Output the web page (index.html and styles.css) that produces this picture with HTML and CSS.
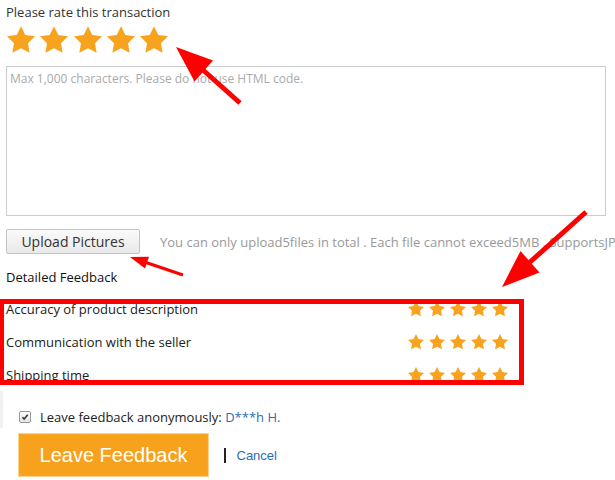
FILE: index.html
```html
<!DOCTYPE html>
<html>
<head>
<meta charset="utf-8">
<link rel="stylesheet" href="styles.css">
</head>
<body>
<div class="page">
  <div class="rate-label">Please rate this transaction</div>
  <div class="big-stars">
    <svg class="star-big" viewBox="2 2 20 19.1"><path d="M12 2l3.09 6.26L22 9.27l-5 4.87 1.18 6.88L12 17.77l-6.18 3.25L7 14.14 2 9.27l6.91-1.01L12 2z"/></svg>
    <svg class="star-big" viewBox="2 2 20 19.1"><path d="M12 2l3.09 6.26L22 9.27l-5 4.87 1.18 6.88L12 17.77l-6.18 3.25L7 14.14 2 9.27l6.91-1.01L12 2z"/></svg>
    <svg class="star-big" viewBox="2 2 20 19.1"><path d="M12 2l3.09 6.26L22 9.27l-5 4.87 1.18 6.88L12 17.77l-6.18 3.25L7 14.14 2 9.27l6.91-1.01L12 2z"/></svg>
    <svg class="star-big" viewBox="2 2 20 19.1"><path d="M12 2l3.09 6.26L22 9.27l-5 4.87 1.18 6.88L12 17.77l-6.18 3.25L7 14.14 2 9.27l6.91-1.01L12 2z"/></svg>
    <svg class="star-big" viewBox="2 2 20 19.1"><path d="M12 2l3.09 6.26L22 9.27l-5 4.87 1.18 6.88L12 17.77l-6.18 3.25L7 14.14 2 9.27l6.91-1.01L12 2z"/></svg>
  </div>
  <textarea class="comment" placeholder="Max 1,000 characters. Please do not use HTML code."></textarea>
  <div class="upload-row">
    <button class="upload-btn">Upload Pictures</button>
    <span class="upload-note">You can only upload5files in total . Each file cannot exceed5MB . SupportsJPG, JPEG, PNG formats.</span>
  </div>
  <div class="detail-title">Detailed Feedback</div>
  <div class="detail">
    <div class="detail-row">
      <span class="detail-name">Accuracy of product description</span>
      <span class="small-stars">
        <svg class="star-small" viewBox="2 2 20 19.1"><path d="M12 2l3.09 6.26L22 9.27l-5 4.87 1.18 6.88L12 17.77l-6.18 3.25L7 14.14 2 9.27l6.91-1.01L12 2z"/></svg>
        <svg class="star-small" viewBox="2 2 20 19.1"><path d="M12 2l3.09 6.26L22 9.27l-5 4.87 1.18 6.88L12 17.77l-6.18 3.25L7 14.14 2 9.27l6.91-1.01L12 2z"/></svg>
        <svg class="star-small" viewBox="2 2 20 19.1"><path d="M12 2l3.09 6.26L22 9.27l-5 4.87 1.18 6.88L12 17.77l-6.18 3.25L7 14.14 2 9.27l6.91-1.01L12 2z"/></svg>
        <svg class="star-small" viewBox="2 2 20 19.1"><path d="M12 2l3.09 6.26L22 9.27l-5 4.87 1.18 6.88L12 17.77l-6.18 3.25L7 14.14 2 9.27l6.91-1.01L12 2z"/></svg>
        <svg class="star-small" viewBox="2 2 20 19.1"><path d="M12 2l3.09 6.26L22 9.27l-5 4.87 1.18 6.88L12 17.77l-6.18 3.25L7 14.14 2 9.27l6.91-1.01L12 2z"/></svg>
      </span>
    </div>
    <div class="detail-row">
      <span class="detail-name">Communication with the seller</span>
      <span class="small-stars">
        <svg class="star-small" viewBox="2 2 20 19.1"><path d="M12 2l3.09 6.26L22 9.27l-5 4.87 1.18 6.88L12 17.77l-6.18 3.25L7 14.14 2 9.27l6.91-1.01L12 2z"/></svg>
        <svg class="star-small" viewBox="2 2 20 19.1"><path d="M12 2l3.09 6.26L22 9.27l-5 4.87 1.18 6.88L12 17.77l-6.18 3.25L7 14.14 2 9.27l6.91-1.01L12 2z"/></svg>
        <svg class="star-small" viewBox="2 2 20 19.1"><path d="M12 2l3.09 6.26L22 9.27l-5 4.87 1.18 6.88L12 17.77l-6.18 3.25L7 14.14 2 9.27l6.91-1.01L12 2z"/></svg>
        <svg class="star-small" viewBox="2 2 20 19.1"><path d="M12 2l3.09 6.26L22 9.27l-5 4.87 1.18 6.88L12 17.77l-6.18 3.25L7 14.14 2 9.27l6.91-1.01L12 2z"/></svg>
        <svg class="star-small" viewBox="2 2 20 19.1"><path d="M12 2l3.09 6.26L22 9.27l-5 4.87 1.18 6.88L12 17.77l-6.18 3.25L7 14.14 2 9.27l6.91-1.01L12 2z"/></svg>
      </span>
    </div>
    <div class="detail-row">
      <span class="detail-name">Shipping time</span>
      <span class="small-stars">
        <svg class="star-small" viewBox="2 2 20 19.1"><path d="M12 2l3.09 6.26L22 9.27l-5 4.87 1.18 6.88L12 17.77l-6.18 3.25L7 14.14 2 9.27l6.91-1.01L12 2z"/></svg>
        <svg class="star-small" viewBox="2 2 20 19.1"><path d="M12 2l3.09 6.26L22 9.27l-5 4.87 1.18 6.88L12 17.77l-6.18 3.25L7 14.14 2 9.27l6.91-1.01L12 2z"/></svg>
        <svg class="star-small" viewBox="2 2 20 19.1"><path d="M12 2l3.09 6.26L22 9.27l-5 4.87 1.18 6.88L12 17.77l-6.18 3.25L7 14.14 2 9.27l6.91-1.01L12 2z"/></svg>
        <svg class="star-small" viewBox="2 2 20 19.1"><path d="M12 2l3.09 6.26L22 9.27l-5 4.87 1.18 6.88L12 17.77l-6.18 3.25L7 14.14 2 9.27l6.91-1.01L12 2z"/></svg>
        <svg class="star-small" viewBox="2 2 20 19.1"><path d="M12 2l3.09 6.26L22 9.27l-5 4.87 1.18 6.88L12 17.77l-6.18 3.25L7 14.14 2 9.27l6.91-1.01L12 2z"/></svg>
      </span>
    </div>
    <div class="highlight"></div>
  </div>
  <div class="anon-row">
    <span class="check"><svg viewBox="0 0 12 12"><path d="M3 6.2l2 2.2L9.2 3.4" fill="none" stroke="#333" stroke-width="1.8"/></svg></span>
    <span class="anon-text">Leave feedback anonymously: <span class="anon-name">D***h H.</span></span>
  </div>
  <div class="actions">
    <button class="leave-btn">Leave Feedback</button>
    <span class="sep"></span>
    <a class="cancel">Cancel</a>
  </div>
  <svg class="arrows" viewBox="0 0 615 480">
    <line x1="240" y1="103" x2="203" y2="70" stroke="#f00" stroke-width="5"/>
    <polygon points="176,47 213,60.5 194.5,81.5" fill="#f00"/>
    <line x1="183" y1="275" x2="146" y2="262.5" stroke="#f00" stroke-width="3"/>
    <polygon points="130,257 149,256.8 145,268.5" fill="#f00"/>
    <line x1="586" y1="212" x2="529" y2="263" stroke="#f00" stroke-width="5"/>
    <polygon points="502,287 539.5,272.5 520.5,251" fill="#f00"/>
  </svg>
</div>
</body>
</html>
```

FILE: styles.css
```css
* { box-sizing: border-box; }
html, body { margin: 0; padding: 0; background: #fff; overflow: hidden; }
.page {
  position: relative;
  width: 615px;
  height: 480px;
  overflow: hidden;
  font-family: "Open Sans", "Liberation Sans", sans-serif;
  font-size: 13px;
  color: #333;
}
.rate-label {
  padding-top: 3px;
  margin-left: 6px;
  line-height: 18px;
}
.big-stars {
  display: flex;
  gap: 5.3px;
  margin: 5px 0 0 7px;
}
.star-big { width: 28px; height: 27px; fill: #f8a31e; display: block; }
.comment {
  display: block;
  margin: 13px 0 0 6px;
  width: 600px;
  height: 150px;
  border: 1px solid #ccc;
  border-radius: 0;
  padding: 4px 3px;
  resize: none;
  font-family: "Open Sans", "Liberation Sans", sans-serif;
  font-size: 12px;
  line-height: 16px;
  outline: none;
}
.comment::placeholder { color: #aaa; }
.upload-row {
  display: flex;
  align-items: center;
  margin: 13px 0 0 6px;
  white-space: nowrap;
}
.upload-btn {
  width: 134px;
  height: 25px;
  padding: 0;
  border: 1px solid #c4c4c4;
  border-radius: 2px;
  background: linear-gradient(#fafafa, #e9e9e9);
  font-family: "Open Sans", "Liberation Sans", sans-serif;
  font-size: 14px;
  color: #333;
  flex: none;
}
.upload-note {
  margin-left: 20px;
  color: #999;
  font-size: 13px;
}
.detail-title {
  margin: 14px 0 0 6px;
  line-height: 18px;
  color: #111;
}
.detail {
  position: relative;
  margin-top: 6px;
  width: 508px;
}
.detail-row {
  display: flex;
  justify-content: space-between;
  align-items: center;
  height: 33px;
  padding-left: 6px;
  color: #222;
}
.small-stars { display: flex; gap: 5px; }
.star-small { width: 16px; height: 15.5px; fill: #f8a31e; display: block; }
.highlight {
  position: absolute;
  left: -1px;
  top: 7px;
  width: 525px;
  height: 86px;
  border: 5px solid #f00;
}
.anon-row {
  display: flex;
  align-items: center;
  padding: 17px 0 2px 16px;
  border-left: 3px solid #f1f1f1;
  line-height: 18px;
}
.check {
  width: 12px;
  height: 12px;
  border: 1px solid #9a9a9a;
  border-radius: 2px;
  background: linear-gradient(#fdfdfd, #e4e4e4);
  display: flex;
}
.check svg { width: 10px; height: 10px; }
.anon-text { margin-left: 9px; color: #222; }
.anon-name { color: #2a6db5; }
.actions {
  display: flex;
  align-items: center;
  margin: 5px 0 0 18px;
}
.leave-btn {
  width: 191px;
  height: 44px;
  padding: 0;
  background: #f7a11d;
  border: 1px solid #fcd38c;
  box-shadow: inset 0 0 0 1px #f5a623;
  border-radius: 0;
  color: #fff;
  font-family: "Liberation Sans", Arial, sans-serif;
  font-size: 20px;
}
.sep {
  width: 1.5px;
  height: 15px;
  background: #222;
  margin-left: 15px;
}
.cancel {
  margin-left: 11px;
  color: #2a6db5;
  font-family: "Liberation Sans", Arial, sans-serif;
  font-size: 13px;
}
.arrows {
  position: absolute;
  left: 0;
  top: 0;
  width: 615px;
  height: 480px;
  pointer-events: none;
}
```
